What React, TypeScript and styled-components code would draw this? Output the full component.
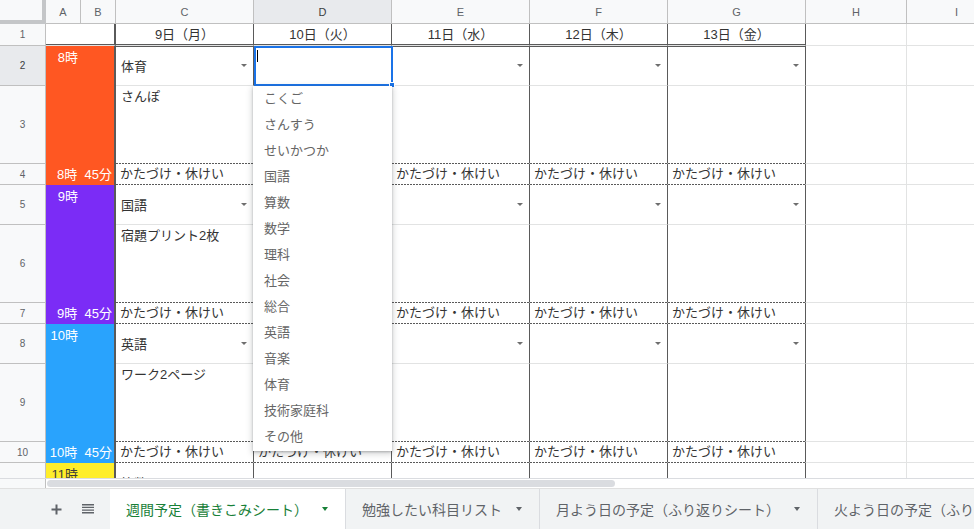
import React from 'react';
import styled, { createGlobalStyle, css } from 'styled-components';

const FONT = `"Liberation Sans", "Noto Sans CJK JP", sans-serif`;
const GRID = '#e2e3e3';
const HEAD_LINE = '#c0c0c0';
const DARK = '#5a5a5a';
const BLUE = '#1a73e8';

const GlobalStyle = createGlobalStyle`
  html, body { margin: 0; padding: 0; background: #fff; overflow: hidden; }
  body { font-family: ${FONT}; }
  *, *::before, *::after { box-sizing: border-box; }
`;

const Page = styled.div`
  width: 974px;
  height: 529px;
  display: flex;
  flex-direction: column;
  overflow: hidden;
  font-family: ${FONT};
`;

const Viewport = styled.div`
  flex: none;
  height: 478px;
  overflow: hidden;
`;

const SheetGrid = styled.div`
  display: grid;
  grid-template-columns: 46px 35px 35px repeat(5, 138px) 101px 100px;
  grid-template-rows: 24px 22px 40px 78px 21px 40px 78px 21px 40px 78px 21px 40px;
  width: max-content;
`;

const Corner = styled.div`
  background: #f8f9fa;
  border-right: 4px solid #c4c6c8;
  border-bottom: 4px solid #c4c6c8;
`;

const ColHeader = styled.div<{ $selected?: boolean }>`
  background: ${p => (p.$selected ? '#e8eaed' : '#f8f9fa')};
  border-right: 1px solid ${HEAD_LINE};
  border-bottom: 1px solid ${HEAD_LINE};
  display: flex;
  align-items: center;
  justify-content: center;
  font-size: 11px;
  color: ${p => (p.$selected ? '#3c4043' : '#5f6368')};
`;

const RowHeader = styled.div<{ $selected?: boolean }>`
  background: ${p => (p.$selected ? '#e8eaed' : '#f8f9fa')};
  border-right: 1px solid ${HEAD_LINE};
  border-bottom: 1px solid ${HEAD_LINE};
  display: flex;
  align-items: center;
  justify-content: center;
  font-size: 10px;
  color: ${p => (p.$selected ? '#3c4043' : '#5f6368')};
`;

const CellBase = styled.div<{ $day?: boolean }>`
  position: relative;
  background: #fff;
  border-right: 1px solid ${p => (p.$day ? DARK : GRID)};
  border-bottom: 1px solid ${GRID};
  font-size: 13px;
  color: #333;
  white-space: nowrap;
  overflow: visible;
  min-width: 0;
`;

const dashedBottom = css`
  border-bottom-color: transparent;
  &::after {
    content: '';
    position: absolute;
    left: 0;
    right: 0;
    bottom: -1px;
    height: 1px;
    background: repeating-linear-gradient(to right, ${DARK} 0 2px, transparent 2px 3px);
  }
`;

const TitleSpacer = styled(CellBase)`
  grid-column: span 2;
  border-right: 2px solid ${DARK};
  box-shadow: inset 0 -1px 0 ${DARK};
`;

const DayTitle = styled(CellBase)`
  border-right-color: ${DARK};
  box-shadow: inset 0 -1px 0 ${DARK};
  text-align: center;
  line-height: 21px;
`;

const SelectCell = styled(CellBase)<{ $topRule?: boolean }>`
  display: flex;
  align-items: center;
  justify-content: space-between;
  padding: 0 6px 0 5px;
  ${p => p.$topRule && css`box-shadow: inset 0 1px 0 ${DARK};`}
`;

const NoteCell = styled(CellBase)`
  padding: 2px 5px;
  line-height: 17px;
  ${dashedBottom}
`;

const BreakCell = styled(CellBase)`
  padding: 0 4px;
  line-height: 20px;
  ${dashedBottom}
`;

const BlankCell = styled(CellBase)``;

const DropArrow = styled.span`
  flex: none;
  width: 0;
  height: 0;
  border-left: 3px solid transparent;
  border-right: 3px solid transparent;
  border-top: 3px solid #6e6e6e;
`;

const HourBlock = styled.div<{ $row: number; $span: number; $bg: string; $fg: string }>`
  grid-column: 2 / span 2;
  grid-row: ${p => p.$row} / span ${p => p.$span};
  background: ${p => p.$bg};
  color: ${p => p.$fg};
  border-right: 2px solid ${DARK};
  display: flex;
  flex-direction: column;
  justify-content: space-between;
  font-size: 13px;
  white-space: pre;
`;

const HourTop = styled.div`
  width: 32px;
  text-align: right;
  padding-top: 3px;
  line-height: 17px;
`;

const HourEnd = styled.div`
  height: 21px;
  line-height: 21px;
  text-align: right;
  padding-right: 2px;
`;

const EditCell = styled(CellBase)`
  z-index: 5;
  box-shadow: inset 0 1px 0 ${DARK};
`;

const SelectionFrame = styled.div`
  position: absolute;
  top: 0;
  left: 0;
  width: 139px;
  height: 40px;
  border: 2px solid ${BLUE};
`;

const FillHandle = styled.div`
  position: absolute;
  right: -4px;
  bottom: -4px;
  width: 6px;
  height: 6px;
  background: ${BLUE};
  border: 1px solid #fff;
`;

const TextCursor = styled.div`
  position: absolute;
  left: 3px;
  top: 4px;
  width: 1px;
  height: 12px;
  background: #000;
`;

const Menu = styled.div`
  position: absolute;
  top: calc(100% + 1px);
  left: -1px;
  width: 139px;
  height: 365px;
  background: #fff;
  box-shadow: 0 2px 6px 1px rgba(60, 64, 67, 0.22), 0 1px 2px rgba(60, 64, 67, 0.3);
  z-index: 10;
`;

const MenuItem = styled.div`
  height: 26px;
  line-height: 26px;
  padding-left: 11px;
  font-size: 13px;
  color: #666;
`;

const ScrollStrip = styled.div`
  flex: none;
  height: 11px;
  display: flex;
  border-top: 1px solid #dadce0;
  border-bottom: 1px solid #e0e0e0;
`;

const ScrollCorner = styled.div`
  width: 46px;
  background: #f8f9fa;
  border-right: 1px solid ${HEAD_LINE};
`;

const ScrollTrack = styled.div`
  flex: 1;
  padding: 1px 0 0 1px;
  background: #fff;
`;

const ScrollThumb = styled.div`
  width: 568px;
  height: 7px;
  border-radius: 4px;
  background: #dadce0;
`;

const TabBar = styled.div`
  flex: none;
  height: 40px;
  display: flex;
  align-items: stretch;
  padding-left: 40px;
  background: #f1f3f4;
  overflow: hidden;
`;

const IconButton = styled.div`
  flex: none;
  width: 32px;
  display: flex;
  align-items: center;
  justify-content: center;
  color: #5f6368;
`;

const Tabs = styled.div`
  display: flex;
  margin-left: 6px;
`;

const Tab = styled.div<{ $active?: boolean }>`
  flex: none;
  display: flex;
  align-items: center;
  padding: 0 17px 0 16px;
  font-size: 14px;
  white-space: nowrap;
  color: ${p => (p.$active ? '#188038' : '#5f6368')};
  background: ${p => (p.$active ? '#fff' : 'transparent')};
  border-right: 1px solid #dadce0;
`;

const TabCaret = styled.span<{ $active?: boolean }>`
  flex: none;
  margin-left: 14px;
  width: 0;
  height: 0;
  border-left: 3.5px solid transparent;
  border-right: 3.5px solid transparent;
  border-top: 4px solid ${p => (p.$active ? '#188038' : '#5f6368')};
`;

const DAYS = ['9日（月）', '10日（火）', '11日（水）', '12日（木）', '13日（金）'];
const COLS = ['A', 'B', 'C', 'D', 'E', 'F', 'G', 'H', 'I'];
const BREAK = 'かたづけ・休けい';
const SUBJECTS = [
  'こくご', 'さんすう', 'せいかつか', '国語', '算数', '数学', '理科',
  '社会', '総合', '英語', '音楽', '体育', '技術家庭科', 'その他',
];
const HOURS = [
  { top: '8時', end: '8時  45分', bg: '#ff5722', fg: '#ffffff', subject: '体育', note: 'さんぽ' },
  { top: '9時', end: '9時  45分', bg: '#7b2cf6', fg: '#ffffff', subject: '国語', note: '宿題プリント2枚' },
  { top: '10時', end: '10時  45分', bg: '#29a3fd', fg: '#ffffff', subject: '英語', note: 'ワーク2ページ' },
];
const TABS = ['週間予定（書きこみシート）', '勉強したい科目リスト', '月よう日の予定（ふり返りシート）', '火よう日の予定（ふり返りシート）'];

function PlusIcon() {
  return (
    <svg width="11" height="11" viewBox="0 0 11 11">
      <path d="M5.5 0.5v10M0.5 5.5h10" stroke="#5f6368" strokeWidth="2" fill="none" />
    </svg>
  );
}

function ListIcon() {
  return (
    <svg width="12" height="9.5" viewBox="3 5 18 14">
      <path d="M3 15h18v-2H3v2zm0 4h18v-2H3v2zm0-8h18V9H3v2zm0-6v2h18V5H3z" fill="#5f6368" />
    </svg>
  );
}

export default function App() {
  const cells: React.ReactNode[] = [];

  cells.push(<Corner key="corner" />);
  COLS.forEach(l => cells.push(<ColHeader key={`ch-${l}`} $selected={l === 'D'}>{l}</ColHeader>));

  cells.push(<RowHeader key="rh1">1</RowHeader>);
  cells.push(<TitleSpacer key="ab1" />);
  DAYS.forEach(d => cells.push(<DayTitle key={`t-${d}`}>{d}</DayTitle>));
  cells.push(<BlankCell key="h1" />, <BlankCell key="i1" />);

  HOURS.forEach((h, i) => {
    const r = 2 + i * 3;
    cells.push(
      <HourBlock key={`hb${i}`} $row={r + 1} $span={3} $bg={h.bg} $fg={h.fg}>
        <HourTop>{h.top}</HourTop>
        <HourEnd>{h.end}</HourEnd>
      </HourBlock>
    );

    cells.push(<RowHeader key={`rh${r}`} $selected={r === 2}>{r}</RowHeader>);
    DAYS.forEach((_, c) => {
      if (r === 2 && c === 1) {
        cells.push(
          <EditCell key={`s${r}-${c}`} $day>
            <SelectionFrame>
              <FillHandle />
            </SelectionFrame>
            <TextCursor />
            <Menu>
              {SUBJECTS.map(s => (
                <MenuItem key={s}>{s}</MenuItem>
              ))}
            </Menu>
          </EditCell>
        );
      } else {
        cells.push(
          <SelectCell key={`s${r}-${c}`} $day $topRule={r === 2}>
            <span>{c === 0 ? h.subject : ''}</span>
            <DropArrow />
          </SelectCell>
        );
      }
    });
    cells.push(<BlankCell key={`h${r}`} />, <BlankCell key={`i${r}`} />);

    cells.push(<RowHeader key={`rh${r + 1}`}>{r + 1}</RowHeader>);
    DAYS.forEach((_, c) => cells.push(<NoteCell key={`n${r}-${c}`} $day>{c === 0 ? h.note : ''}</NoteCell>));
    cells.push(<BlankCell key={`h${r + 1}`} />, <BlankCell key={`i${r + 1}`} />);

    cells.push(<RowHeader key={`rh${r + 2}`}>{r + 2}</RowHeader>);
    DAYS.forEach((_, c) => cells.push(<BreakCell key={`b${r}-${c}`} $day>{BREAK}</BreakCell>));
    cells.push(<BlankCell key={`h${r + 2}`} />, <BlankCell key={`i${r + 2}`} />);
  });

  cells.push(
    <HourBlock key="hb11" $row={12} $span={1} $bg="#ffee2a" $fg="#3c3c3c">
      <HourTop>11時</HourTop>
    </HourBlock>
  );
  cells.push(<RowHeader key="rh11">11</RowHeader>);
  DAYS.forEach((_, c) => {
    cells.push(
      <SelectCell key={`s11-${c}`} $day>
        <span>{c === 0 ? '算数' : ''}</span>
        <DropArrow />
      </SelectCell>
    );
  });
  cells.push(<BlankCell key="h11" />, <BlankCell key="i11" />);

  return (
    <Page>
      <GlobalStyle />
      <Viewport>
        <SheetGrid>{cells}</SheetGrid>
      </Viewport>
      <ScrollStrip>
        <ScrollCorner />
        <ScrollTrack>
          <ScrollThumb />
        </ScrollTrack>
      </ScrollStrip>
      <TabBar>
        <IconButton>
          <PlusIcon />
        </IconButton>
        <IconButton>
          <ListIcon />
        </IconButton>
        <Tabs>
          {TABS.map((t, i) => (
            <Tab key={t} $active={i === 0}>
              {t}
              <TabCaret $active={i === 0} />
            </Tab>
          ))}
        </Tabs>
      </TabBar>
    </Page>
  );
}
